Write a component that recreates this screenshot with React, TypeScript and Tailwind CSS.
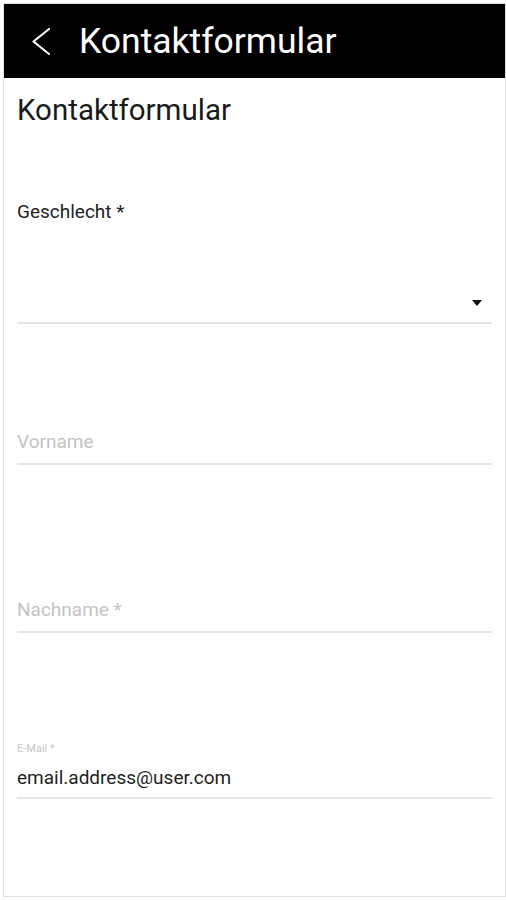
import React from "react";

export default function App() {
  const font = { fontFamily: "Roboto, 'Noto Sans', sans-serif" };
  return (
    <div className="w-[506px] h-[900px] bg-white pl-[3px] pt-[3px] pb-[3px]" style={font}>
      <div className="w-[503px] h-[894px] border border-[#dedede] flex flex-col">
        <div className="h-[74px] bg-black flex items-center shrink-0">
          <svg className="ml-[28px] w-[18px] h-[27px]" viewBox="0 0 18 27" fill="none">
            <polyline points="17,1 1.5,13.5 17,26" stroke="white" strokeWidth="2.2" strokeLinecap="round" strokeLinejoin="round" />
          </svg>
          <span className="ml-[29px] text-[35.5px] leading-[42px] text-white">Kontaktformular</span>
        </div>
        <div className="pl-[13px] pr-[13px] flex flex-col">
          <div className="mt-[15px] text-[29.5px] leading-[34px] text-[#1a1a1a]">Kontaktformular</div>

          <div className="mt-[74px] text-[19px] leading-[22px] text-[#222]">Geschlecht *</div>
          <div className="h-[101px] border-b-2 border-[#e4e4e4] flex items-end justify-end pb-[16px] pr-[10px]">
            <svg width="10" height="6" viewBox="0 0 10 6">
              <polygon points="0,0 10,0 5,6" fill="#111" />
            </svg>
          </div>

          <div className="mt-[107px] pb-[10px] border-b-2 border-[#e4e4e4] text-[19px] leading-[22px] text-[#c4c4c4]">Vorname</div>

          <div className="mt-[134px] pb-[10px] border-b-2 border-[#e4e4e4] text-[19px] leading-[22px] text-[#c4c4c4]">Nachname *</div>

          <div className="mt-[109px] text-[11px] leading-[13px] text-[#c8c8c8]">E-Mail *</div>
          <div className="mt-[12px] pb-[8px] border-b-2 border-[#e4e4e4] text-[19px] leading-[22px] text-[#1f1f1f]">email.address@user.com</div>
        </div>
      </div>
    </div>
  );
}
